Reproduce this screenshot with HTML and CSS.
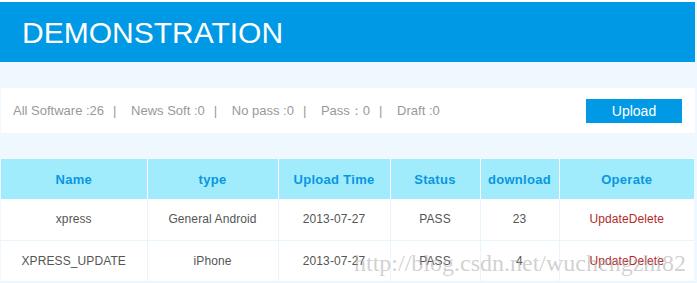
FILE: index.html
```html
<!DOCTYPE html>
<html lang="en">
<head>
  <meta charset="UTF-8">
  <title>Demonstration</title>
  <link rel="stylesheet" href="styles.css">
</head>
<body>
<div class="page">
  <div class="banner">
    <h1>DEMONSTRATION</h1>
  </div>

  <div class="toolbar">
    <div class="counts">
      <span>All Software :26</span><span class="sep">|</span>
      <span>News Soft :0</span><span class="sep">|</span>
      <span>No pass :0</span><span class="sep">|</span>
      <span>Pass：0</span><span class="sep">|</span>
      <span>Draft :0</span>
    </div>
    <button class="upload">Upload</button>
  </div>

  <table class="list">
    <colgroup>
      <col class="c1"><col class="c2"><col class="c3"><col class="c4"><col class="c5"><col class="c6">
    </colgroup>
    <thead>
      <tr>
        <th>Name</th>
        <th>type</th>
        <th>Upload Time</th>
        <th>Status</th>
        <th>download</th>
        <th>Operate</th>
      </tr>
    </thead>
    <tbody>
      <tr>
        <td>xpress</td>
        <td>General Android</td>
        <td>2013-07-27</td>
        <td>PASS</td>
        <td>23</td>
        <td><a href="#">Update</a><a href="#">Delete</a></td>
      </tr>
      <tr>
        <td>XPRESS_UPDATE</td>
        <td>iPhone</td>
        <td>2013-07-27</td>
        <td>PASS</td>
        <td>4</td>
        <td><a href="#">Update</a><a href="#">Delete</a></td>
      </tr>
    </tbody>
  </table>

  <div class="watermark">http://blog.csdn.net/wuchengzhi82</div>
</div>
</body>
</html>
```

FILE: styles.css
```css
* {
  box-sizing: border-box;
}

body {
  margin: 0;
  padding-top: 2px;
  background: #fff;
  font-family: "Liberation Sans", Arial, sans-serif;
  font-size: 12px;
}

.page {
  position: relative;
  background: #f0f8ff;
  height: 281px;
  padding-right: 2px;
}

.banner {
  background: #0099e5;
  height: 60px;
  padding-left: 22px;
  display: flex;
  align-items: center;
}

.banner h1 {
  margin: 0;
  color: #fff;
  font-weight: normal;
  font-size: 30px;
  line-height: 1;
  padding-top: 1px;
}

.toolbar {
  margin: 26px 0 0 1px;
  background: #fff;
  height: 45px;
  display: flex;
  align-items: center;
  justify-content: space-between;
  padding: 0 13px 0 12px;
}

.counts {
  color: #999;
  font-size: 13px;
  padding-top: 1px;
}

.sep {
  margin: 0 11px 0 9px;
}

.upload {
  width: 96px;
  height: 24px;
  border: none;
  background: #0099e5;
  color: #fff;
  font-family: "Liberation Sans", Arial, sans-serif;
  font-size: 14px;
  padding: 0;
}

.list {
  margin: 26px 0 0 1px;
  width: 693px;
  table-layout: fixed;
  border-collapse: collapse;
  background: #fff;
}

.c1 { width: 146px; }
.c2 { width: 131px; }
.c3 { width: 112px; }
.c4 { width: 90px; }
.c5 { width: 79px; }
.c6 { width: 135px; }

.list th {
  background: #a0ecfd;
  color: #0a96e0;
  font-weight: bold;
  font-size: 13px;
  letter-spacing: 0.3px;
  height: 40px;
  padding: 0;
  border-left: 1px solid #fff;
  text-align: center;
}

.list th:first-child {
  border-left: none;
}

.list td {
  height: 41px;
  padding: 0;
  color: #555;
  text-align: center;
  letter-spacing: 0.1px;
  border-left: 1px solid #e8f5fd;
  border-bottom: 1px solid #e8f5fd;
}

.list td:first-child {
  border-left: none;
}

.list td a {
  color: #b22a2a;
  text-decoration: none;
}

.watermark {
  position: absolute;
  left: 354px;
  top: 248px;
  font-family: "Liberation Serif", "Times New Roman", serif;
  font-size: 24px;
  color: rgba(170, 170, 170, 0.55);
  pointer-events: none;
}
```
